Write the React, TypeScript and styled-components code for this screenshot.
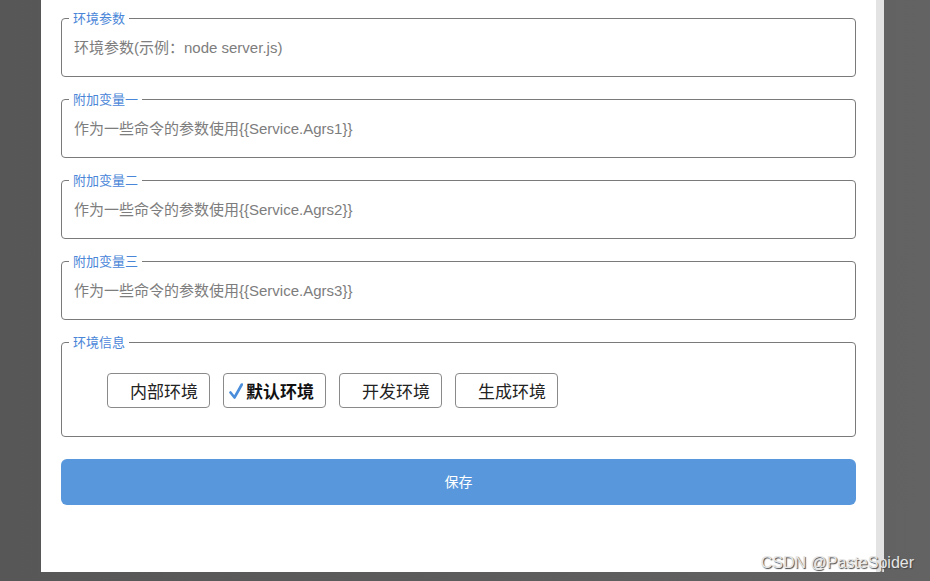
import { useState } from "react";
import styled, { createGlobalStyle } from "styled-components";

// ============================================================================
// LAYOUT
// ============================================================================

const GlobalStyle = createGlobalStyle`
  html, body {
    margin: 0;
    padding: 0;
    height: 100%;
  }
  body {
    background: linear-gradient(to right, #575757 0%, #5c5c5c 50%, #636363 100%);
    font-family: "Liberation Sans", "Noto Sans CJK SC", sans-serif;
    overflow: hidden;
  }
`;

const Screen = styled.div`
  position: relative;
  width: 930px;
  height: 581px;
`;

const Dialog = styled.div`
  display: flex;
  width: 843px;
  height: 572px;
  margin-left: 41px;
`;

const DialogBody = styled.div`
  flex: 1;
  background: #fff;
  padding: 10px 20px 0;
  box-sizing: border-box;
  display: flex;
  flex-direction: column;
  gap: 14px;
`;

const ScrollTrack = styled.div`
  width: 8px;
  background: #e3e3e3;
`;

// ============================================================================
// FORM
// ============================================================================

const Group = styled.fieldset`
  margin: 0;
  padding: 0 7px 9px;
  border: 1px solid #7a7a7a;
  border-radius: 4px;
  min-width: 0;
`;

const Legend = styled.legend`
  padding: 0 4px;
  font-size: 13px;
  line-height: 17px;
  color: #4a86d8;
`;

const TextInput = styled.input`
  display: block;
  width: 100%;
  height: 40px;
  box-sizing: border-box;
  border: none;
  outline: none;
  padding: 0 5px;
  background: transparent;
  font-family: inherit;
  font-size: 15px;
  color: #555;

  &::placeholder {
    color: #7d7d7d;
  }
`;

const OptionRow = styled.div`
  display: flex;
  gap: 13px;
  padding: 22px 0 19px 38px;
`;

const Option = styled.button<{ $checked: boolean }>`
  all: unset;
  cursor: pointer;
  box-sizing: border-box;
  width: 103px;
  height: 35px;
  display: flex;
  align-items: center;
  padding-left: 5px;
  border: 1px solid #8a8a8a;
  border-radius: 4px;
  font-size: 17px;
  font-weight: ${(p) => (p.$checked ? 700 : 400)};
  color: ${(p) => (p.$checked ? "#111" : "#222")};
  font-family: "Liberation Sans", "Noto Sans CJK SC", sans-serif;
`;

const Check = styled.span<{ $show: boolean }>`
  width: 17px;
  display: flex;
  align-items: center;
  visibility: ${(p) => (p.$show ? "visible" : "hidden")};
`;

const SaveButton = styled.button`
  all: unset;
  cursor: pointer;
  height: 46px;
  margin-top: 8px;
  border-radius: 6px;
  background: #5897db;
  color: #fff;
  font-size: 14px;
  text-align: center;
  line-height: 46px;
  font-family: "Liberation Sans", "Noto Sans CJK SC", sans-serif;
`;

const Watermark = styled.div`
  position: absolute;
  right: 16px;
  bottom: 9px;
  font-size: 16px;
  color: #e6e6e6;
  text-shadow: 1px 1px 1px #444;
  font-family: "Liberation Sans", sans-serif;
`;

// ============================================================================
// DATA
// ============================================================================

const fields = [
  { label: "环境参数", placeholder: "环境参数(示例：node server.js)" },
  { label: "附加变量一", placeholder: "作为一些命令的参数使用{{Service.Agrs1}}" },
  { label: "附加变量二", placeholder: "作为一些命令的参数使用{{Service.Agrs2}}" },
  { label: "附加变量三", placeholder: "作为一些命令的参数使用{{Service.Agrs3}}" },
];

const envs = ["内部环境", "默认环境", "开发环境", "生成环境"];

// ============================================================================
// COMPONENT
// ============================================================================

function CheckMark() {
  return (
    <svg width="14" height="16" viewBox="0 0 14 16">
      <path
        d="M1.5 9.5 L5.5 14.5 L12.8 1.5"
        fill="none"
        stroke="#4a8ddb"
        strokeWidth="2.6"
        strokeLinecap="round"
        strokeLinejoin="round"
      />
    </svg>
  );
}

export default function App() {
  const [selected, setSelected] = useState<string[]>(["默认环境"]);

  const toggle = (env: string) =>
    setSelected((s) => (s.includes(env) ? s.filter((e) => e !== env) : [...s, env]));

  return (
    <Screen>
      <GlobalStyle />
      <Dialog>
        <DialogBody>
          {fields.map((f) => (
            <Group key={f.label}>
              <Legend>{f.label}</Legend>
              <TextInput placeholder={f.placeholder} />
            </Group>
          ))}

          <Group>
            <Legend>环境信息</Legend>
            <OptionRow>
              {envs.map((env) => {
                const on = selected.includes(env);
                return (
                  <Option key={env} $checked={on} onClick={() => toggle(env)}>
                    <Check $show={on}>
                      <CheckMark />
                    </Check>
                    {env}
                  </Option>
                );
              })}
            </OptionRow>
          </Group>

          <SaveButton>保存</SaveButton>
        </DialogBody>
        <ScrollTrack />
      </Dialog>
      <Watermark>CSDN @PasteSpider</Watermark>
    </Screen>
  );
}
